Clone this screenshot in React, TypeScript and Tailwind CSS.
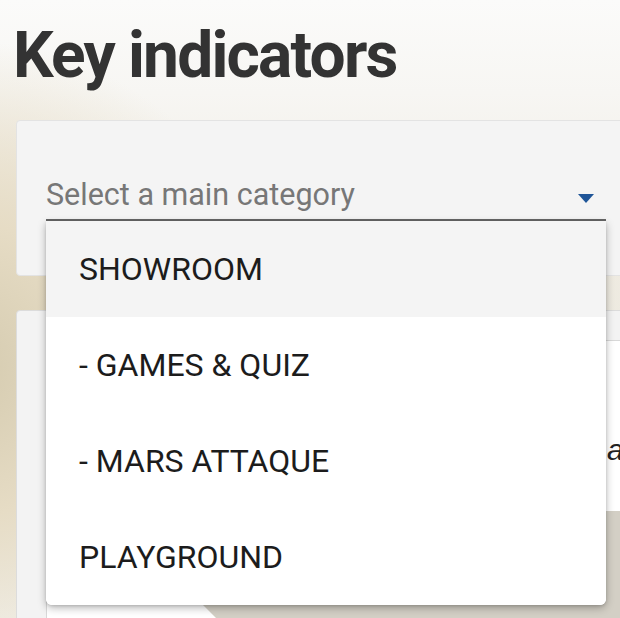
export default function App() {
  const items = ["SHOWROOM", "- GAMES & QUIZ", "- MARS ATTAQUE", "PLAYGROUND"];
  return (
    <div className="w-[620px] h-[618px] overflow-hidden font-['Roboto',sans-serif] bg-[radial-gradient(330px_330px_at_-40px_370px,#d4caae_0%,#e6dcc5_45%,rgba(236,232,222,0)_100%),linear-gradient(180deg,#fbfbfa_0%,#f7f6f3_15%,#efebe1_40%,#ece9e0_60%,#f1f1ee_85%,#f4f4f2_100%)]">
      <h1 className="pl-[13px] pt-[24px] text-[64px] leading-[64px] font-bold text-[#333] tracking-[-1.8px]">
        Key indicators
      </h1>
      <div className="ml-4 mt-[32px] w-[700px] h-[156px] rounded-[4px] border border-[#e3e3e3] bg-[#f4f4f4] pl-[29px] pt-[59px]">
        <div className="relative z-10 w-[560px]">
          <div className="flex items-start justify-between border-b-2 border-[#666] pb-[9px]">
            <span className="text-[30.5px] leading-[30px] text-[#777]">Select a main category</span>
            <svg width="16" height="9" viewBox="0 0 16 9" className="mt-[14px] mr-[12px]">
              <path d="M0 0 H16 L8 9 Z" fill="#1f5598" />
            </svg>
          </div>
          <div className="absolute top-full left-0 w-[560px] bg-white rounded-b-[6px] overflow-hidden shadow-[0_3px_8px_rgba(0,0,0,0.28),0_1px_3px_rgba(0,0,0,0.12)]">
            {items.map((it, i) => (
              <div
                key={it}
                className={
                  i === 0
                    ? "h-[96px] flex items-center pl-[33px] text-[32px] leading-[32px] text-[#1c1c1c] bg-[#f4f4f4]"
                    : "h-[96px] flex items-center pl-[33px] text-[32px] leading-[32px] text-[#1c1c1c] bg-white"
                }
              >
                {it}
              </div>
            ))}
          </div>
        </div>
      </div>
      <div className="ml-4 mt-[34px] w-[700px] h-[400px] rounded-[4px] border border-[#dcdcdc] bg-[#f3f3f3] pl-[29px] pt-[29px]">
        <div className="border-l border-t border-[#d8d8d8] bg-white">
          <div className="h-[170px] pt-[94px] pl-[560px]">
            <span className="italic text-[30px] leading-[30px] text-[#222] font-['Liberation_Sans',sans-serif]">a</span>
          </div>
          <div className="relative h-[130px] bg-white">
            <div className="h-full bg-[#d3cfc5] [clip-path:polygon(62px_0,100%_0,100%_130px,192px_130px)]" />
          </div>
        </div>
      </div>
    </div>
  );
}
